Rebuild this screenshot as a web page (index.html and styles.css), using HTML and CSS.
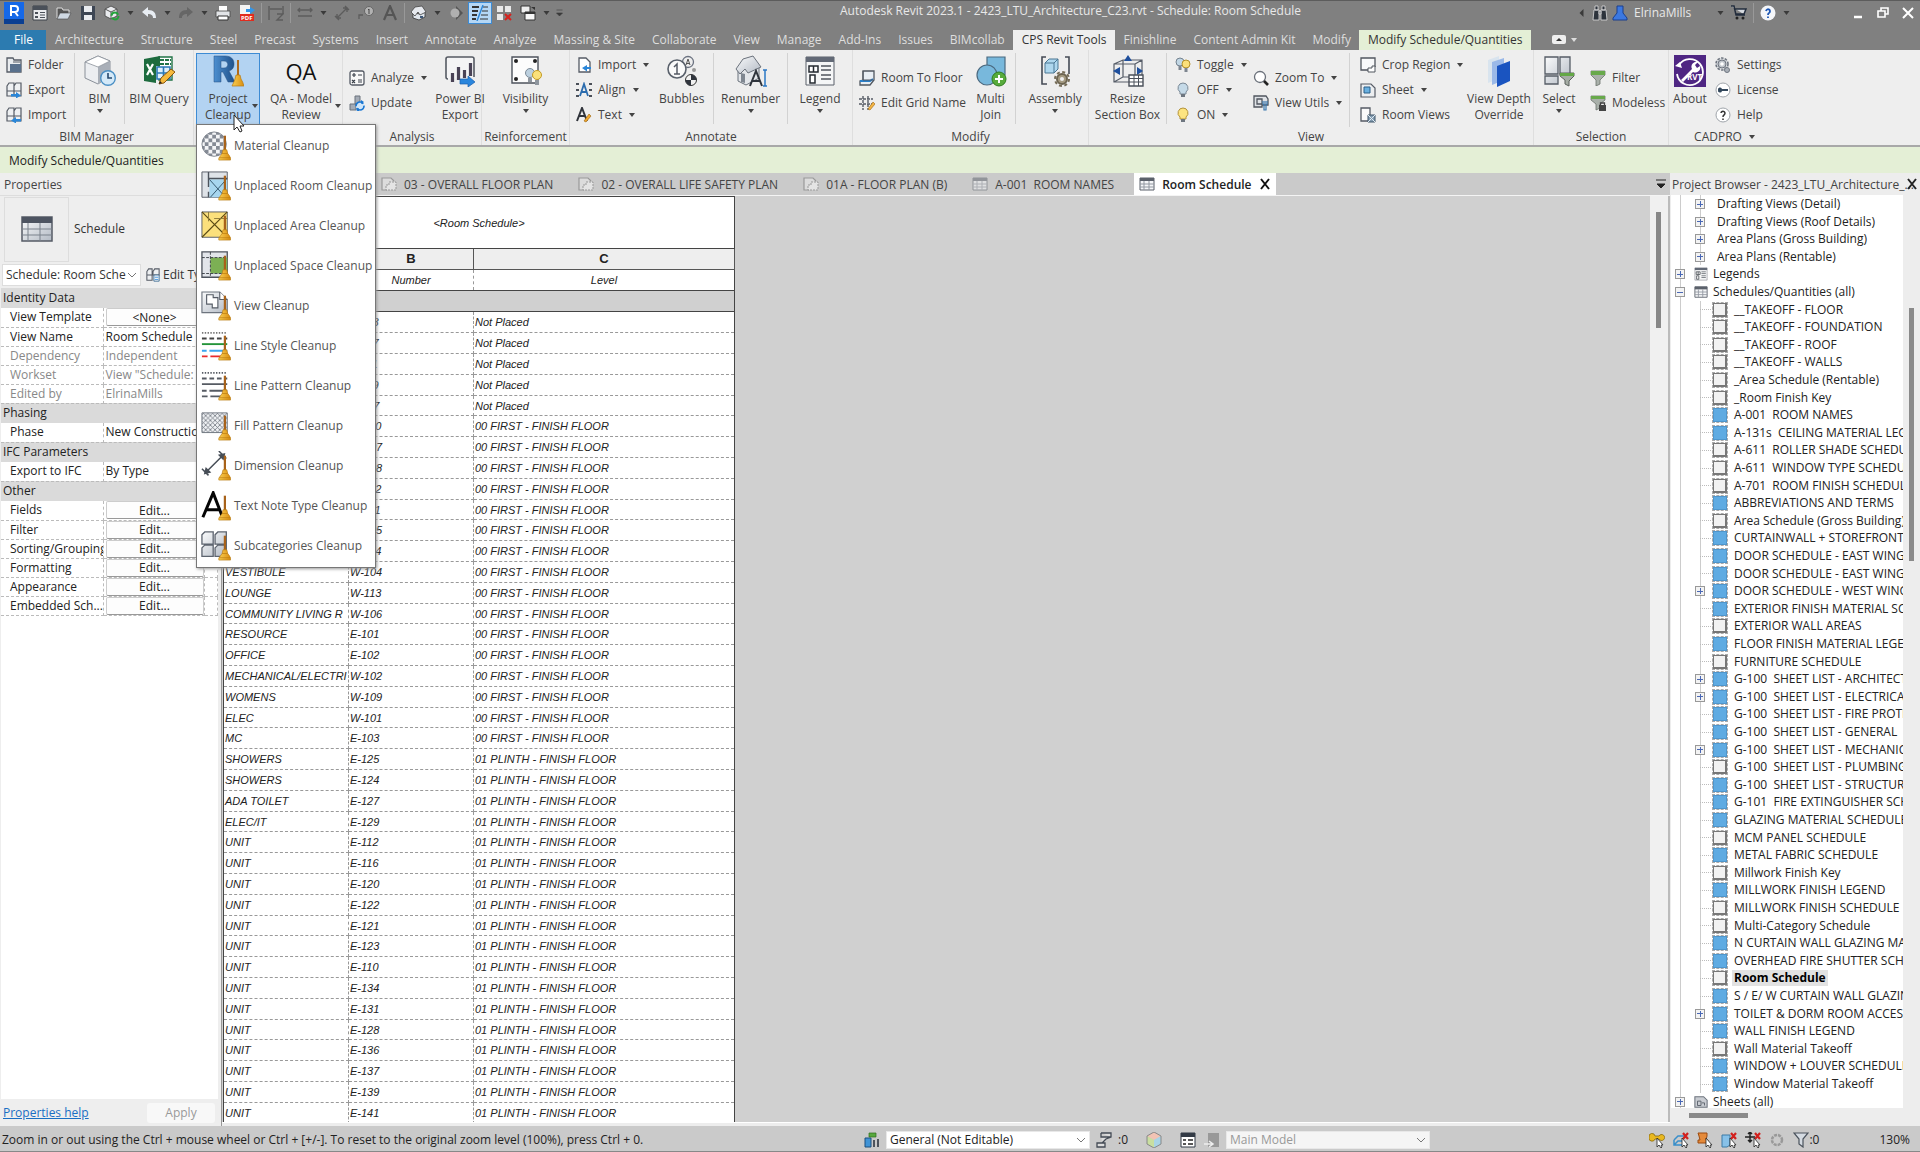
FILE: index.html
```html
<!DOCTYPE html>
<html lang="en">
<head>
<meta charset="utf-8">
<title>Autodesk Revit 2023.1 - Schedule: Room Schedule</title>
<link rel="stylesheet" href="styles.css">
</head>
<body>
<svg class="defs" aria-hidden="true">
  <defs>
    <linearGradient id="gr" x1="0" y1="0" x2="1" y2="1"><stop offset="0" stop-color="#fafbfc"/><stop offset="1" stop-color="#b3bac4"/></linearGradient>
    <linearGradient id="gold" x1="0" y1="0" x2="1" y2="0"><stop offset="0" stop-color="#f9cf52"/><stop offset="1" stop-color="#d98d10"/></linearGradient>
    <linearGradient id="rb" x1="0" y1="0" x2="1" y2="0"><stop offset="0" stop-color="#4d8fd0"/><stop offset="1" stop-color="#1e4f88"/></linearGradient>
    <pattern id="check" width="8" height="8" patternUnits="userSpaceOnUse"><rect width="8" height="8" fill="#f4f5f7"/><path d="M0 0h4v4H0zM4 4h4v4H4z" fill="#858b95"/></pattern>
    <pattern id="hatch" width="5" height="5" patternUnits="userSpaceOnUse"><path d="M0 0l5 5M5 0L0 5" stroke="#6a7078" stroke-width=".8"/></pattern>
  </defs>
  <symbol id="broom" viewBox="0 0 32 32"><path d="M25.500 5v16" stroke="#a8621a" stroke-width="2.400"/><path d="M23.500 20h4l1 4q2 2 3 5v2H19v-2q2-3 3.500-5z" fill="url(#gold)" stroke="#b97a10" stroke-width=".7"/><path d="M22.500 24h6M19.500 28.500h12" stroke="#b97a10" stroke-width=".7"/></symbol>
  <symbol id="arrow" viewBox="0 0 8 8"><path d="M1 2h6L4 6z" fill="currentColor"/></symbol>
  <symbol id="chev" viewBox="0 0 10 10"><path d="M1 3l4 4 4-4" fill="none" stroke="#777"/></symbol>
  <symbol id="folder" viewBox="0 0 16 16"><path d="M1 15V1h6l1 2h7v12z" fill="#e9ecef" stroke="#555b65" stroke-width="1.300"/><path d="M4 7h11v8H4z" fill="#58708c"/><path d="M7 5h7" stroke="#555b65"/></symbol>
  <symbol id="expo" viewBox="0 0 16 16"><path d="M1 4l2-3h5v13H1zM8 4l2-3h5v13H8zM1 9h7M8 9h7" fill="#eef0f2" stroke="#555b65" stroke-width="1.200"/><path d="M5 12h5v-2l5 3.500-5 3v-2H5z" fill="#2a86d8"/></symbol>
  <symbol id="impo" viewBox="0 0 16 16"><path d="M1 4l2-3h5v13H1zM8 4l2-3h5v13H8zM1 9h7M8 9h7" fill="#eef0f2" stroke="#555b65" stroke-width="1.200"/><path d="M15 12h-5v-2l-5 3.500 5 3v-2h5z" fill="#2a86d8"/></symbol>
  <symbol id="etype" viewBox="0 0 16 16"><path d="M1 4l2-3h4v13H1zM8 4l2-3h5v7H8zM1 8h6" fill="#eef0f2" stroke="#555b65" stroke-width="1.200"/><path d="M9 8h6v7H9z" fill="#fff" stroke="#35658f"/><path d="M10 10.500h4M10 13h4" stroke="#2a86d8"/></symbol>
  <symbol id="bim" viewBox="0 0 32 32"><path d="M14 1l12 5v15l-12 8L1 23V7z" fill="#eceef1" stroke="#8a9099"/><path d="M14 12l12-6v15l-12 8z" fill="#a9afb8"/><path d="M1 7l13 5 12-6-12-5z" fill="#fff" stroke="#8a9099" stroke-width=".8"/><circle cx="24" cy="23" r="7.300" fill="#d4e9f8" stroke="#4a8fc4" stroke-width="1.400"/><path d="M24 18v5h4" stroke="#25486e" stroke-width="1.600" fill="none"/></symbol>
  <symbol id="query" viewBox="0 0 32 32"><path d="M16 2h13v23H16z" fill="#fff" stroke="#217346" stroke-width="1.400"/><path d="M17 5h11M17 9h11" stroke="#217346" stroke-width="2" stroke-dasharray="4 1"/><path d="M14 12h13v12H14zM20.500 12v12M14 18h13" stroke="#2a78b8" stroke-width="1.600" fill="#dff0fb"/><path d="M1 4l16-3v10h-4v17L1 26z" fill="#1d6b3e"/><path d="M4 9l6 11M10 9L4 20" stroke="#fff" stroke-width="2.200"/><path d="M16 29l2-6L28 14l4 3-11 11z" fill="#f5b93d" stroke="#7d4a08" stroke-width=".9"/><path d="M16 29l1-3 2 2z" fill="#222"/></symbol>
  <symbol id="rlogo" viewBox="0 0 32 32"><path fill-rule="evenodd" d="M2 27V1h11c6 0 9 3 9 8 0 4-2 6-5 7l6 11h-7l-5-10h-2v10zM9 6v7h3c5 0 5-7 0-7z" fill="url(#rb)" stroke="#244f80" stroke-width=".5"/><path d="M26 5v16" stroke="#b06a1c" stroke-width="2"/><path d="M24 20h4l1 4q2 3 3 7H20q2-4 3-7z" fill="url(#gold)" stroke="#b97a10" stroke-width=".7"/></symbol>
  <symbol id="calc" viewBox="0 0 16 16"><rect x="1" y="1" width="14" height="14" rx="2" fill="#f8f8f8" stroke="#555b65" stroke-width="1.300"/><path d="M3 5h4M5 3v4M9 5h4M3 10l3 3M6 10l-3 3M9 10h4M9 12h4" stroke="#3b414b" stroke-width="1.200"/></symbol>
  <symbol id="update" viewBox="0 0 16 16"><path d="M1 9h6v6H1zM6 1h5v8H6z" fill="#a4abb5" stroke="#6b727d"/><circle cx="11" cy="11" r="4" fill="#cfe6fa" stroke="#1976d2" stroke-width="1.700" stroke-dasharray="10 2"/><path d="M12 5l3 2-3 2zM10 17l-3-2 3-2z" fill="#1976d2"/></symbol>
  <symbol id="pbi" viewBox="0 0 32 32"><path d="M4 24q-2 0-2-2V4q0-2 2-2h24q2 0 2 2v18" fill="#f4f4f5" stroke="#555a63" stroke-width="1.600"/><path d="M8.500 27v-9M14.500 25V12M20.500 23v-8M26.500 21V8" stroke="#4a4356" stroke-width="3.200"/><path d="M16 24h8v-3l7 6-7 5v-3h-8z" fill="#2a86dd" stroke="#1a5fae" stroke-width=".7"/></symbol>
  <symbol id="visi" viewBox="0 0 32 32"><path d="M2 2h26v26H2z" fill="#fcfcfc" stroke="#4d535c" stroke-width="1.400"/><g fill="#222"><circle cx="6" cy="6" r="2"/><circle cx="25" cy="6" r="2"/><circle cx="6" cy="24" r="2"/></g><circle cx="20" cy="18" r="4.500" fill="#bcd0df" stroke="#7c8a96"/><circle cx="27" cy="20" r="4.500" fill="#fbe17a" stroke="#c39b25"/><path d="M18 23h4v4h-4zM25 25h4v5h-4z" fill="#8f969e"/></symbol>
  <symbol id="aimp" viewBox="0 0 16 16"><path d="M3 1h7l4 4v10H3z" fill="#fff" stroke="#555b65" stroke-width="1.300"/><path d="M15 12h-4v2.500L6 11l5-3v2h4z" fill="#2a86d8"/></symbol>
  <symbol id="align" viewBox="0 0 16 16"><path d="M4 14L8 2l4 12M5.500 10h5" fill="none" stroke="#2b6cae" stroke-width="1.800"/><path d="M0 2h3M0 8h3M0 14h3M13 2h3M13 8h3M13 14h3" stroke="#4a4f58" stroke-width="2"/></symbol>
  <symbol id="text" viewBox="0 0 16 16"><path d="M1 14L6 1l5 13M3 9h6" fill="none" stroke="#30343b" stroke-width="2"/><path d="M8 14l5-7 2 2-5 6z" fill="#f2a92e" stroke="#99620c" stroke-width=".6"/></symbol>
  <symbol id="bubbles" viewBox="0 0 32 32"><circle cx="22" cy="7" r="5.500" fill="#eee" stroke="#6b7280" stroke-width="1.300"/><path d="M20 10l2-6 2 6M20.500 8.500h3" fill="none" stroke="#555"/><circle cx="11" cy="14" r="9" fill="#fafafa" stroke="#59606b" stroke-width="1.600"/><path d="M8 12l3-3v10M8 19h6" fill="none" stroke="#555b65" stroke-width="1.500"/><circle cx="25" cy="25" r="5.500" fill="#f1f1f1" stroke="#333"/><path d="M25 25v-5.500A5.500 5.500 0 0 1 30.500 25zM25 25v5.500A5.500 5.500 0 0 1 19.500 25z" fill="#30353d"/><circle cx="28" cy="15" r="2" fill="#999"/></symbol>
  <symbol id="renum" viewBox="0 0 32 32"><path d="M3 14v12l8 4 13-7V10z" fill="#e3e6ea" stroke="#6b727c"/><path d="M1 14L8 4l10-3 8 11-13 6-3-4-5 5z" fill="url(#gr)" stroke="#6b727c"/><path d="M6 27v-9l4 1v9z" fill="#7f8791"/><path d="M15 31l6-15 6 15M17 26h8" fill="none" stroke="#30353d" stroke-width="2"/><path d="M28 15h4M30 15v16M28 31h4" stroke="#2b78c5" stroke-width="1.500"/></symbol>
  <symbol id="legend" viewBox="0 0 32 32"><path d="M2 2h28v28H2z" fill="#f5f6f7" stroke="#5b616b"/><path d="M2 2h28v5H2z" fill="#626976"/><path d="M5 11h9v6H5zM9.500 11v6M6 20h5v8H6z" fill="#fff" stroke="#252a31" stroke-width="1.500"/><path d="M17 11h10M17 15h10M17 20h10M17 24h10" stroke="#50565f" stroke-width="1.600"/></symbol>
  <symbol id="r2f" viewBox="0 0 16 16"><path d="M4 1h11v9l-4 5H1V11l3-1z" fill="#e8eef4" stroke="#505760" stroke-width="1.300"/><path d="M1 11h10l3-2" stroke="#2a7fc9" stroke-width="2" fill="none"/><path d="M4 1v9h10" stroke="#505760" fill="none"/></symbol>
  <symbol id="grid" viewBox="0 0 16 16"><path d="M4 1v14M9 1v14M0 4h14M0 9h14" stroke="#555b65" stroke-width="1.400" stroke-dasharray="3 1"/><path d="M9 14l5-7 2 2-5 6z" fill="#f5b544" stroke="#9b640d" stroke-width=".6"/></symbol>
  <symbol id="join" viewBox="0 0 32 32"><path d="M12 2h18v18H12z" fill="#78b8dc" stroke="#4b6a80" stroke-width="1.200"/><circle cx="12" cy="20" r="10" fill="#78b8dc" stroke="#4b6a80" stroke-width="1.200"/><circle cx="24" cy="24" r="7" fill="#57ab3c" stroke="#2f7d20"/><path d="M24 20v8M20 24h8" stroke="#fff" stroke-width="2"/></symbol>
  <symbol id="assembly" viewBox="0 0 32 32"><path d="M7 2H3v27h5M26 2h4v17" fill="none" stroke="#454b55" stroke-width="1.600"/><path d="M6 8l4-4h9v10l-4 4H6z" fill="#aed7ee" stroke="#4a7693"/><path d="M6 8h9v10M15 8l4-4" fill="none" stroke="#4a7693"/><circle cx="23" cy="24" r="5" fill="#a59b82" stroke="#6c6450" stroke-width="2"/><circle cx="23" cy="24" r="7" fill="none" stroke="#756c57" stroke-width="2" stroke-dasharray="3 2.500"/><circle cx="23" cy="24" r="2" fill="#eee"/></symbol>
  <symbol id="section" viewBox="0 0 32 32"><path d="M2 9l9-4h19v17l-7 5H2zM2 9h21v18M23 9l7-4M11 5v17L2 27M11 22h19" fill="none" stroke="#565d68" stroke-width="1.200"/><path d="M16 0l4 6h-8zM1 16l7-4v8zM31 16l-6-4v8z" fill="#1e4f9d"/><path d="M17 20h14v11H17z" fill="#fff" stroke="#4a505a" stroke-width="1.400"/><path d="M17 23.500h14M17 27h14M22 20v11M26.500 20v11" stroke="#4a505a"/></symbol>
  <symbol id="tog" viewBox="0 0 16 16"><circle cx="5" cy="5" r="4" fill="#c2d7e5" stroke="#74828f"/><path d="M3.500 9h3v4h-3z" fill="#7d858f"/><circle cx="11" cy="7" r="4" fill="#fbe07a" stroke="#b3902c"/><path d="M9.500 11h3v4h-3z" fill="#7d858f"/></symbol>
  <symbol id="off" viewBox="0 0 16 16"><path d="M8 1a5 5 0 0 1 3 9v2H5v-2a5 5 0 0 1 3-9z" fill="#c5dae8" stroke="#7b8996"/><path d="M6 12h4v3H6z" fill="#6e7680"/></symbol>
  <symbol id="on" viewBox="0 0 16 16"><path d="M8 1a5 5 0 0 1 3 9v2H5v-2a5 5 0 0 1 3-9z" fill="#fde480" stroke="#b4933a"/><path d="M6 12h4v3H6z" fill="#6e7680"/></symbol>
  <symbol id="zoom" viewBox="0 0 16 16"><circle cx="7" cy="7" r="5.500" fill="#fff" stroke="#6a707a" stroke-width="1.300"/><path d="M11 11l4 4" stroke="#222" stroke-width="2.600"/></symbol>
  <symbol id="vutil" viewBox="0 0 16 16"><path d="M1 1h12l2 3v6H9v2H1zM4 4h5v5H4z" fill="#dfe2e6" stroke="#50565f" stroke-width="1.300"/><path d="M10 6v3l1 1v5h2v-5l1-1V6M12 6v3" stroke="#3b78ae" fill="none" stroke-width="1.200"/></symbol>
  <symbol id="crop" viewBox="0 0 16 16"><path d="M8 13H1V1h14v9" fill="#f8f9fa" stroke="#50565f" stroke-width="1.300"/><path d="M8 15v-4h4V9h3v6z" fill="#fff" stroke="#50565f"/></symbol>
  <symbol id="sheet" viewBox="0 0 16 16"><path d="M1 2h10l4 4v9H1z" fill="#eceef0" stroke="#555b65" stroke-width="1.200"/><path d="M4 5h6v6H4z" fill="#69b0e0" stroke="#2a5f88"/></symbol>
  <symbol id="rviews" viewBox="0 0 16 16"><path d="M1 1h9v13H1z" fill="#fafafa" stroke="#555b65" stroke-width="1.300"/><path d="M8 8h7v7H8z" fill="#829bb0" stroke="#3f5468"/><path d="M8 8l7 7M15 8l-7 7" stroke="#dfeaf2"/></symbol>
  <symbol id="depth" viewBox="0 0 32 32"><path d="M5 5l11-4v23L5 28z" fill="#d9e4ee"/><path d="M9 7l12-4v22L9 30z" fill="#9bb9e8"/><path d="M14 11l13-5v20l-13 6z" fill="#1a54c0"/></symbol>
  <symbol id="select" viewBox="0 0 32 32"><path d="M2 2h13v17H2zM17 2h10v17H17zM2 21h13v8H2z" fill="url(#gr)" stroke="#555c66" stroke-width="1.300"/><path d="M17 18h14v3l-5 5v5l-4-2v-4l-5-4z" fill="#a5aca4" stroke="#5a615c"/><path d="M17 18h14v3H17z" fill="#63a745"/></symbol>
  <symbol id="funnel" viewBox="0 0 16 16"><path d="M1 1h14v4l-5 5v4l-4 2v-6L1 5z" fill="#a9b0aa" stroke="#69716b" stroke-width=".8"/><path d="M1 1h14v4H1z" fill="#68a94b"/></symbol>
  <symbol id="modeless" viewBox="0 0 16 16"><path d="M1 1h14v4l-5 4v4l-4 2v-6L1 5z" fill="#a9b0aa" stroke="#69716b" stroke-width=".8"/><path d="M1 1h14v3H1z" fill="#68a94b"/><path d="M9 10h7v6H9z" fill="#444"/><path d="M10.500 10V8h4v2" fill="none" stroke="#444" stroke-width="1.300"/></symbol>
  <symbol id="about" viewBox="0 0 32 32"><path d="M0 0h32v32H0z" fill="#4f2683"/><path d="M5 10a13 13 0 1 1-2 9" fill="none" stroke="#fff" stroke-width="1.800"/><path d="M1 11l7 2-2-6zM7 25L18 14a5 5 0 0 1 6-7l-3 3 2 3 3-2a5 5 0 0 1-7 6L9 27z" fill="#fff"/><text x="13" y="25" font-size="8" font-weight="700" fill="#fff" font-family="Open Sans, sans-serif">RVT</text></symbol>
  <symbol id="gear" viewBox="0 0 16 16"><circle cx="7" cy="7" r="6" fill="#d5d8dc" stroke="#6f7680" stroke-width="1.600" stroke-dasharray="2.500 1.300"/><circle cx="7" cy="7" r="4" fill="#c1c6cc" stroke="#6f7680"/><circle cx="12" cy="13" r="2.500" fill="#aab0b8" stroke="#6f7680"/><circle cx="7" cy="7" r="1.800" fill="#fff"/></symbol>
  <symbol id="key" viewBox="0 0 16 16"><circle cx="8" cy="8" r="7" fill="#fff" stroke="#a0a5ab"/><path d="M3 8a2 2 0 1 1 4-1h6v2H7a2 2 0 0 1-4-1z" fill="#33475b"/></symbol>
  <symbol id="help" viewBox="0 0 16 16"><circle cx="8" cy="8" r="7" fill="#fff" stroke="#a0a5ab"/><path d="M6 6a2 2 0 1 1 3 2q-1 .5-1 2M8 11.500v1.500" fill="none" stroke="#333" stroke-width="1.500"/></symbol>
  <symbol id="plan" viewBox="0 0 16 16"><path d="M6 14H1V2h9l3 3" fill="#dcdcdc" stroke="#999" stroke-width="1.200"/><path d="M5 9h3V6h7v8H5z" fill="#e4e4e4" stroke="#999" stroke-dasharray="2 1"/></symbol>
  <symbol id="tbl" viewBox="0 0 16 16"><path d="M1 2h14v12H1z" fill="#f5f6f8" stroke="#5b616b"/><path d="M1 2h14v3H1z" fill="#5b616b"/><path d="M1 8h14M1 11h14M5 5v9M10 5v9" stroke="#9298a1"/></symbol>
  <symbol id="sheets" viewBox="0 0 16 16"><path d="M1 2h10l4 4v8H1z" fill="#c9ccd2" stroke="#6d747e" stroke-width="1.200"/><path d="M4 7h4v5H4zM9 9h3v3" fill="none" stroke="#555c66"/></symbol>
  <symbol id="m-mat" viewBox="0 0 32 32"><circle cx="14" cy="14" r="13" fill="url(#check)" stroke="#7a808a"/></symbol>
  <symbol id="m-room" viewBox="0 0 32 32"><path d="M1 1h27v27H1z" fill="#dfe3e8" stroke="#555b65"/><path d="M9 9h19v19H9z" fill="#a7d6ef"/><path d="M9 9l17 19M27 9L10 28" stroke="#31546b"/><path d="M8 1v16M8 22v6M8 8h20" stroke="#4d535c" stroke-width="1.500"/></symbol>
  <symbol id="m-area" viewBox="0 0 32 32"><path d="M1 1h27v27H1z" fill="#fbe07c" stroke="#555b65"/><path d="M1 1l27 27M28 1L1 28" stroke="#5b4b14" stroke-width="1.200"/><path d="M8 1v10M14 8h14" stroke="#8c7a3a"/></symbol>
  <symbol id="m-space" viewBox="0 0 32 32"><path d="M1 1h27v27H1z" fill="#e2e5ea" stroke="#4d535c" stroke-width="1.400"/><path d="M10 7h18v17H10z" fill="#7cb054"/><path d="M10 1v27M1 7h27M1 24h27" stroke="#3c4148" stroke-dasharray="3 1.500"/></symbol>
  <symbol id="m-view" viewBox="0 0 32 32"><path d="M1 1h19l8 8v14H1z" fill="url(#gr)" stroke="#6d747e" stroke-width="1.200"/><path d="M6 4h7v3h5v11h-6v-4H6zM20 1v8h8" fill="#fff" stroke="#565c66" stroke-width="1.200"/></symbol>
  <symbol id="m-style" viewBox="0 0 32 32"><g fill="none" stroke-width="2"><path d="M1 2h27" stroke="#777" stroke-dasharray="1.500 1.500"/><path d="M1 8h27" stroke="#444" stroke-dasharray="5 3"/><path d="M1 14h27" stroke="#24943a"/><path d="M1 21h5M9 21h19" stroke="#3aa5f0"/><path d="M1 27h6M10 27h14" stroke="#ea2b2b"/></g></symbol>
  <symbol id="m-line" viewBox="0 0 32 32"><g fill="none" stroke="#565b63" stroke-width="2"><path d="M1 2h27" stroke-dasharray="1.500 1.500"/><path d="M1 8h27" stroke-dasharray="5 3"/><path d="M1 14h27M1 21h5M9 21h19M1 27h6M10 27h14"/></g></symbol>
  <symbol id="m-fill" viewBox="0 0 32 32"><path d="M1 2h27v21H1z" fill="#eef0f3"/><path d="M1 2h27v21H1z" fill="url(#hatch)" stroke="#6c737d"/></symbol>
  <symbol id="m-dim" viewBox="0 0 32 32"><path d="M5 23L24 4M1 19l7 7M19 0l8 8" stroke="#474e57" stroke-width="1.600"/><path d="M3 25l2-8 6 6zM26 2l-8 2 6 6z" fill="#474e57"/></symbol>
  <symbol id="m-text" viewBox="0 0 32 32"><path d="M2 28L13 2l10 26M6 20h14" fill="none" stroke="#050505" stroke-width="3.200"/></symbol>
  <symbol id="m-sub" viewBox="0 0 32 32"><path d="M1 4l3-3h9v13H1zM15 4l3-3h9v13H15zM1 18l3-3h9v12H1zM15 18l3-3h9v12H15z" fill="url(#gr)" stroke="#5d646f" stroke-width="1.400"/></symbol>
</svg>

<header class="titlebar">
  <div class="qat">
    <button class="slot logo" aria-label="Revit"><svg viewBox="0 0 20 22"><path d="M0 0h20v17H0z" fill="#1568e8"/><path d="M0 17h20v5H0z" fill="#0b3f92"/><path d="M7 14V4h4q3 0 3 3t-3 3H7M11 10l3 4" fill="none" stroke="#fff" stroke-width="2"/></svg></button>
    <button class="slot" aria-label="Home"><svg viewBox="0 0 16 16"><path d="M1 1h14v14H1z" fill="#e9ebee" stroke="#3b4048"/><path d="M1 1h14v4H1z" fill="#4a5059"/><path d="M3 7h3v2H3zM3 11h3v2H3z" fill="#4a5059"/><path d="M8 7.500h5M8 10h5M8 12.500h5" stroke="#4a5059"/></svg></button>
    <button class="slot" aria-label="Open"><svg viewBox="0 0 16 16"><path d="M1 13V3h5l1 2h6v3" fill="#555" stroke="#ddd"/><path d="M1 14l3-6h11l-3 6z" fill="#cfd8e2" stroke="#444" stroke-width=".6"/></svg></button>
    <button class="slot" aria-label="Save"><svg viewBox="0 0 16 16"><path d="M1 1h14v14H1z" fill="#3d4654"/><path d="M4 1h8v6H4zM4 10h8v5H4z" fill="#e9ecf0"/></svg></button>
    <button class="slot" aria-label="Synchronize"><svg viewBox="0 0 16 16"><path d="M1 4l6-3 6 3v7l-6 3-6-3z" fill="#e9ebee" stroke="#555"/><path d="M7 7v7M1 4l6 3 6-3" stroke="#555" fill="none"/><circle cx="11" cy="11" r="3.500" fill="none" stroke="#22a33a" stroke-width="2" stroke-dasharray="9 2"/></svg></button>
    <svg class="dd"><use href="#arrow"/></svg>
    <button class="slot" aria-label="Undo"><svg viewBox="0 0 16 16"><path d="M1 7l6-5v3c6 0 8 3 8 8h-3c0-3-2-4-5-4v3z" fill="#e8edf3"/></svg></button>
    <svg class="dd"><use href="#arrow"/></svg>
    <button class="slot dim" aria-label="Redo"><svg viewBox="0 0 16 16"><path d="M15 7L9 2v3c-6 0-8 3-8 8h3c0-3 2-4 5-4v3z" fill="#666"/></svg></button>
    <svg class="dd"><use href="#arrow"/></svg>
    <button class="slot" aria-label="Print"><svg viewBox="0 0 16 16"><path d="M4 1h8v6H4z" fill="#fff"/><path d="M1 6h14v6H1z" fill="#e2e4e7" stroke="#444" stroke-width=".8"/><path d="M3 11h10v4H3z" fill="#fff" stroke="#333"/></svg></button>
    <button class="slot" aria-label="Export PDF"><svg viewBox="0 0 16 16"><path d="M1 0h10v10H1z" fill="#f4f4f4"/><path d="M7 4h4V2l5 3-5 4V7H7z" fill="#3295e8"/><path d="M1 9h14v7H1z" fill="#e12c1e"/><text x="2" y="15" font-size="6" font-weight="700" fill="#fff" font-family="Open Sans, sans-serif">PDF</text></svg></button>
    <i class="vs"></i>
    <button class="slot dim" aria-label="Measure"><svg viewBox="0 0 16 16"><path d="M1 1v14M15 1v8M2 4h12M9 9h6l-6 6h6" fill="none" stroke="#5c5c5c" stroke-width="1.400"/></svg></button>
    <i class="vs"></i>
    <button class="slot dim" aria-label="Aligned Dimension"><svg viewBox="0 0 16 16"><path d="M1 5h14M1 11h14M3 3l-2 2 2 2M13 3l2 2-2 2" fill="none" stroke="#5c5c5c" stroke-width="1.400"/></svg></button>
    <svg class="dd"><use href="#arrow"/></svg>
    <button class="slot dim" aria-label="Dimension"><svg viewBox="0 0 16 16"><path d="M3 13L13 3M1 11l4 4M11 1l4 4M3 9v4h4M9 3h4v4" fill="none" stroke="#5c5c5c" stroke-width="1.400"/></svg></button>
    <button class="slot dim" aria-label="Tag"><svg viewBox="0 0 16 16"><circle cx="11" cy="6" r="4.500" fill="#b2b2b2" stroke="#666"/><path d="M10 5l1-1v5" fill="none" stroke="#444"/><path d="M1 14v-4h4" fill="none" stroke="#5c5c5c" stroke-width="1.300"/></svg></button>
    <button class="slot dim" aria-label="Text"><svg viewBox="0 0 16 16"><path d="M2 15L8 1l6 14M4 10h8" fill="none" stroke="#555" stroke-width="2.200"/></svg></button>
    <i class="vs"></i>
    <button class="slot" aria-label="3D View"><svg viewBox="0 0 16 16"><path d="M2 8v5l6 2 6-3V7L9 9z" fill="#dfe5ec" stroke="#333" stroke-width=".8"/><path d="M0 7l4-5 7-1 4 6-6 3-2-3-3 4z" fill="#e6e9ee" stroke="#444" stroke-width=".8"/><path d="M9 11h3v2H9z" fill="#3d5878"/></svg></button>
    <svg class="dd"><use href="#arrow"/></svg>
    <button class="slot dim" aria-label="Section"><svg viewBox="0 0 16 16"><path d="M8 1l7 7-7 7z" fill="#555"/><circle cx="7" cy="8" r="4.500" fill="#b0b0b0"/></svg></button>
    <button class="slot lit" aria-label="Thin Lines"><svg viewBox="0 0 16 16"><path d="M0 2h7M0 6h6M0 10h5M0 14h4" stroke="#333" stroke-width="2"/><path d="M11 2h5M10 6h6M9 10h7M8 14h8" stroke="#333"/><path d="M5 16L11 0" stroke="#2a86d8" stroke-width="1.400"/></svg></button>
    <button class="slot" aria-label="Close Inactive"><svg viewBox="0 0 16 16"><path d="M1 1h6v6H1zM9 1h6v6H9zM1 9h6v6H1z" fill="#e8e8e8"/><path d="M9 9l6 6M15 9l-6 6" stroke="#d6221e" stroke-width="2"/></svg></button>
    <button class="slot" aria-label="Switch Windows"><svg viewBox="0 0 16 16"><path d="M1 1h9v7H1z" fill="#eee" stroke="#333"/><path d="M5 7h10v8H5z" fill="#f8f8f8" stroke="#333"/><path d="M5 7h10v2H5zM11 2h4v3" fill="#333"/></svg></button>
    <svg class="dd"><use href="#arrow"/></svg>
    <svg class="dd" viewBox="0 0 8 8"><path d="M1 1h6M1 4h6L4 7z" fill="currentColor" stroke="currentColor" stroke-width=".6"/></svg>
  </div>
  <div class="title">Autodesk Revit 2023.1 - 2423_LTU_Architecture_C23.rvt - Schedule: Room Schedule</div>
  <div class="account">
    <svg class="dd" viewBox="0 0 8 8"><path d="M6 0v8L2 4z" fill="currentColor"/></svg>
    <button class="slot" aria-label="Search"><svg viewBox="0 0 16 16"><path d="M3 1h3v4H3zM10 1h3v4h-3zM2 5h5l0 10H1zM9 5h5l1 10H9zM7 6h2v3H7z" fill="#2d333c" stroke="#ddd" stroke-width=".8"/></svg></button>
    <button class="user"><svg viewBox="0 0 16 16"><path d="M5 1h6v7l4 5v2H1v-2l4-5z" fill="#3c78e0" stroke="#1b3f8d"/></svg>ElrinaMills</button>
    <svg class="dd"><use href="#arrow"/></svg>
    <button class="slot" aria-label="App Store"><svg viewBox="0 0 16 16"><path d="M0 1h3l2 9h9M4 4h11l-2 5H5" fill="#d6dae0" stroke="#222c3c" stroke-width="1.500"/><circle cx="6" cy="13" r="1.500" fill="#222"/><circle cx="12" cy="13" r="1.500" fill="#222"/></svg></button>
    <i class="vs"></i>
    <button class="slot" aria-label="Help"><svg viewBox="0 0 16 16"><circle cx="8" cy="8" r="7.500" fill="#f4f6f9"/><path d="M6 6a2 2 0 1 1 3 2q-1 .5-1 2M8 11.500v1.500" fill="none" stroke="#1c56b4" stroke-width="1.800"/></svg></button>
    <svg class="dd"><use href="#arrow"/></svg>
    <button class="win first" aria-label="Minimize"><svg viewBox="0 0 12 12"><path d="M2 10h8" stroke="#fff" stroke-width="2.500"/></svg></button>
    <button class="win" aria-label="Restore"><svg viewBox="0 0 12 12"><path d="M4 4V1h7v6H8M1 4h7v6H1z" fill="none" stroke="#fff" stroke-width="1.600"/></svg></button>
    <button class="win" aria-label="Close"><svg viewBox="0 0 12 12"><path d="M1 1l10 10M11 1L1 11" stroke="#fff" stroke-width="2"/></svg></button>
  </div>
</header>

<nav class="tabs">
  <a href="#" class="file">File</a><a href="#">Architecture</a><a href="#">Structure</a><a href="#">Steel</a><a href="#">Precast</a><a href="#">Systems</a><a href="#">Insert</a><a href="#">Annotate</a><a href="#">Analyze</a><a href="#">Massing &amp; Site</a><a href="#">Collaborate</a><a href="#">View</a><a href="#">Manage</a><a href="#">Add-Ins</a><a href="#">Issues</a><a href="#">BIMcollab</a><a href="#" class="active">CPS Revit Tools</a><a href="#">Finishline</a><a href="#">Content Admin Kit</a><a href="#">Modify</a><a href="#" class="ctx">Modify Schedule/Quantities</a>
  <button class="mini" aria-label="Minimize ribbon"><svg viewBox="0 0 28 12"><rect x="1" y="1" width="14" height="9" rx="2" fill="#eee"/><path d="M5 7h6L8 4z" fill="#333"/><path d="M20 4h6l-3 4z" fill="#ddd"/></svg></button>
</nav>

<section class="ribbon">
  <div class="panel p194">
    <div class="tools">
      <div class="stack sep"><button><svg><use href="#folder"/></svg>Folder</button><button><svg><use href="#expo"/></svg>Export</button><button><svg><use href="#impo"/></svg>Import</button></div>
      <button class="big w50 sep"><svg><use href="#bim"/></svg><span>BIM</span><svg class="dd"><use href="#arrow"/></svg></button>
      <button class="big w68"><svg><use href="#query"/></svg><span>BIM Query</span></button>
    </div>
    <div class="plabel">BIM Manager</div>
  </div>
  <div class="panel p149">
    <div class="tools">
      <div class="drop">
        <button class="big lit w64"><svg><use href="#rlogo"/></svg><span>Project<br>Cleanup</span><svg class="dd side"><use href="#arrow"/></svg></button>
        <div class="menu" role="menu">
          <button role="menuitem"><span class="mi"><svg><use href="#m-mat"/></svg><svg><use href="#broom"/></svg></span>Material Cleanup</button>
          <button role="menuitem"><span class="mi"><svg><use href="#m-room"/></svg><svg><use href="#broom"/></svg></span>Unplaced Room Cleanup</button>
          <button role="menuitem"><span class="mi"><svg><use href="#m-area"/></svg><svg><use href="#broom"/></svg></span>Unplaced Area Cleanup</button>
          <button role="menuitem"><span class="mi"><svg><use href="#m-space"/></svg><svg><use href="#broom"/></svg></span>Unplaced Space Cleanup</button>
          <button role="menuitem"><span class="mi"><svg><use href="#m-view"/></svg><svg><use href="#broom"/></svg></span>View Cleanup</button>
          <button role="menuitem"><span class="mi"><svg><use href="#m-style"/></svg><svg><use href="#broom"/></svg></span>Line Style Cleanup</button>
          <button role="menuitem"><span class="mi"><svg><use href="#m-line"/></svg><svg><use href="#broom"/></svg></span>Line Pattern Cleanup</button>
          <button role="menuitem"><span class="mi"><svg><use href="#m-fill"/></svg><svg><use href="#broom"/></svg></span>Fill Pattern Cleanup</button>
          <button role="menuitem"><span class="mi"><svg><use href="#m-dim"/></svg><svg><use href="#broom"/></svg></span>Dimension Cleanup</button>
          <button role="menuitem"><span class="mi"><svg><use href="#m-text"/></svg><svg><use href="#broom"/></svg></span>Text Note Type Cleanup</button>
          <button role="menuitem"><span class="mi"><svg><use href="#m-sub"/></svg><svg><use href="#broom"/></svg></span>Subcategories Cleanup</button>
        </div>
        <svg class="cursor" viewBox="0 0 12 19"><path d="M1 1v15l3-3 3 5 2-1-2-5h4z" fill="#fff" stroke="#222"/></svg>
      </div>
      <button class="big w84"><b class="qa">QA</b><span>QA - Model<br>Review</span><svg class="dd side"><use href="#arrow"/></svg></button>
    </div>
    <div class="plabel"></div>
  </div>
  <div class="panel p139">
    <div class="tools">
      <div class="stack"><button><svg><use href="#calc"/></svg>Analyze<svg class="dd"><use href="#arrow"/></svg></button><button><svg><use href="#update"/></svg>Update</button></div>
      <button class="big w64"><svg><use href="#pbi"/></svg><span>Power BI<br>Export</span></button>
    </div>
    <div class="plabel">Analysis</div>
  </div>
  <div class="panel p88">
    <div class="tools"><button class="big w84"><svg><use href="#visi"/></svg><span>Visibility</span><svg class="dd"><use href="#arrow"/></svg></button></div>
    <div class="plabel">Reinforcement</div>
  </div>
  <div class="panel p283">
    <div class="tools">
      <div class="stack"><button><svg><use href="#aimp"/></svg>Import<svg class="dd"><use href="#arrow"/></svg></button><button><svg><use href="#align"/></svg>Align<svg class="dd"><use href="#arrow"/></svg></button><button><svg><use href="#text"/></svg>Text<svg class="dd"><use href="#arrow"/></svg></button></div>
      <button class="big w64 sep"><svg><use href="#bubbles"/></svg><span>Bubbles</span></button>
      <button class="big w84 sep"><svg><use href="#renum"/></svg><span>Renumber</span><svg class="dd"><use href="#arrow"/></svg></button>
      <button class="big w64"><svg><use href="#legend"/></svg><span>Legend</span><svg class="dd"><use href="#arrow"/></svg></button>
    </div>
    <div class="plabel">Annotate</div>
  </div>
  <div class="panel p236">
    <div class="tools">
      <div class="stack"><button><svg><use href="#r2f"/></svg>Room To Floor</button><button><svg><use href="#grid"/></svg>Edit Grid Name</button></div>
      <button class="big w50 sep"><svg><use href="#join"/></svg><span>Multi<br>Join</span></button>
      <button class="big w78"><svg><use href="#assembly"/></svg><span>Assembly</span><svg class="dd"><use href="#arrow"/></svg></button>
    </div>
    <div class="plabel">Modify</div>
  </div>
  <div class="panel p445">
    <div class="tools">
      <button class="big w78 sep"><svg><use href="#section"/></svg><span>Resize<br>Section Box</span></button>
      <div class="stack narrow"><button><svg><use href="#tog"/></svg>Toggle<svg class="dd"><use href="#arrow"/></svg></button><button><svg><use href="#off"/></svg>OFF<svg class="dd"><use href="#arrow"/></svg></button><button><svg><use href="#on"/></svg>ON<svg class="dd"><use href="#arrow"/></svg></button></div>
      <div class="stack medium sep"><button><svg><use href="#zoom"/></svg>Zoom To<svg class="dd"><use href="#arrow"/></svg></button><button><svg><use href="#vutil"/></svg>View Utils<svg class="dd"><use href="#arrow"/></svg></button></div>
      <div class="stack"><button><svg><use href="#crop"/></svg>Crop Region<svg class="dd"><use href="#arrow"/></svg></button><button><svg><use href="#sheet"/></svg>Sheet<svg class="dd"><use href="#arrow"/></svg></button><button><svg><use href="#rviews"/></svg>Room Views</button></div>
      <button class="big w68"><svg><use href="#depth"/></svg><span>View Depth<br>Override</span></button>
    </div>
    <div class="plabel">View</div>
  </div>
  <div class="panel p135">
    <div class="tools">
      <button class="big w50"><svg><use href="#select"/></svg><span>Select</span><svg class="dd"><use href="#arrow"/></svg></button>
      <div class="stack"><button><svg><use href="#funnel"/></svg>Filter</button><button><svg><use href="#modeless"/></svg>Modeless</button></div>
    </div>
    <div class="plabel">Selection</div>
  </div>
  <div class="panel last">
    <div class="tools">
      <button class="big w42"><svg><use href="#about"/></svg><span>About</span></button>
      <div class="stack slim"><button><svg><use href="#gear"/></svg>Settings</button><button><svg><use href="#key"/></svg>License</button><button><svg><use href="#help"/></svg>Help</button></div>
    </div>
    <div class="plabel cad">CADPRO<svg class="dd"><use href="#arrow"/></svg></div>
  </div>
</section>
<div class="context">Modify Schedule/Quantities</div>

<main>
  <aside class="props">
    <h2>Properties</h2>
    <div class="type"><span class="thumb"><svg viewBox="0 0 32 26"><path d="M1 1h30v24H1z" fill="url(#gr)" stroke="#555b65" stroke-width="1.500"/><path d="M1 1h30v6H1z" fill="#4d5461"/><path d="M1 13h30M1 19h30M7 7v18M19 7v18" stroke="#7b828c"/></svg></span>Schedule</div>
    <div class="picker"><span class="combo"><select aria-label="Type"><option>Schedule: Room Sche</option></select><svg><use href="#chev"/></svg></span><button><svg><use href="#etype"/></svg>Edit Type</button></div>
    <div class="gridbox">
    <table class="grid">
      <colgroup><col class="c1"><col class="c2"><col class="c3"></colgroup>
      <tr><th colspan="3">Identity Data</th></tr>
      <tr><td>View Template</td><td><button>&lt;None&gt;</button></td><td></td></tr>
      <tr><td>View Name</td><td>Room Schedule</td><td></td></tr>
      <tr class="ro"><td>Dependency</td><td>Independent</td><td></td></tr>
      <tr class="ro"><td>Workset</td><td>View "Schedule: ...</td><td></td></tr>
      <tr class="ro"><td>Edited by</td><td>ElrinaMills</td><td></td></tr>
      <tr><th colspan="3">Phasing</th></tr>
      <tr><td>Phase</td><td>New Construction</td><td></td></tr>
      <tr><th colspan="3">IFC Parameters</th></tr>
      <tr><td>Export to IFC</td><td>By Type</td><td></td></tr>
      <tr><th colspan="3">Other</th></tr>
      <tr><td>Fields</td><td><button>Edit...</button></td><td></td></tr>
      <tr><td>Filter</td><td><button>Edit...</button></td><td></td></tr>
      <tr><td>Sorting/Grouping</td><td><button>Edit...</button></td><td></td></tr>
      <tr><td>Formatting</td><td><button>Edit...</button></td><td></td></tr>
      <tr><td>Appearance</td><td><button>Edit...</button></td><td></td></tr>
      <tr><td>Embedded Sch...</td><td><button>Edit...</button></td><td></td></tr>
    </table>
    </div>
    <div class="pfoot"><a href="#">Properties help</a><button disabled>Apply</button></div>
  </aside>

  <section class="work">
    <div class="vtabs">
      <a href="#"><svg><use href="#plan"/></svg>03 - OVERALL FLOOR PLAN</a>
      <a href="#"><svg><use href="#plan"/></svg>02 - OVERALL LIFE SAFETY PLAN</a>
      <a href="#"><svg><use href="#plan"/></svg>01A - FLOOR PLAN (B)</a>
      <a href="#" class="faint"><svg><use href="#tbl"/></svg>A-001&nbsp; ROOM NAMES</a>
      <a href="#" class="cur"><svg><use href="#tbl"/></svg>Room Schedule<svg class="x" viewBox="0 0 12 12"><path d="M2 1l8 10M10 1L2 11" stroke="#111" stroke-width="2"/></svg></a>
      <button class="more" aria-label="More views"><svg viewBox="0 0 10 10"><path d="M0 1h10M1 5h8L5 9z" fill="#222" stroke="#222"/></svg></button>
    </div>
    <div class="canvas">
      <div class="sheet">
      <table class="sched">
        <colgroup><col class="ca"><col class="ca"><col class="cc"></colgroup>
        <thead>
          <tr class="ttl"><td colspan="3">&lt;Room Schedule&gt;</td></tr>
          <tr class="abc"><th>A</th><th>B</th><th>C</th></tr>
          <tr class="hd"><td>Name</td><td>Number</td><td>Level</td></tr>
          <tr class="gap"><td colspan="3"></td></tr>
        </thead>
        <tbody>
          <tr><td>UNIT</td><td>E-113</td><td>Not Placed</td></tr>
          <tr><td>UNIT</td><td>E-117</td><td>Not Placed</td></tr>
          <tr><td>UNIT</td><td>E-111</td><td>Not Placed</td></tr>
          <tr><td>UNIT</td><td>E-119</td><td>Not Placed</td></tr>
          <tr><td>UNIT</td><td>E-107</td><td>Not Placed</td></tr>
          <tr><td>UNIT</td><td>W-110</td><td>00 FIRST - FINISH FLOOR</td></tr>
          <tr><td>UNIT</td><td>W-107</td><td>00 FIRST - FINISH FLOOR</td></tr>
          <tr><td>UNIT</td><td>W-108</td><td>00 FIRST - FINISH FLOOR</td></tr>
          <tr><td>UNIT</td><td>W-112</td><td>00 FIRST - FINISH FLOOR</td></tr>
          <tr><td>UNIT</td><td>W-111</td><td>00 FIRST - FINISH FLOOR</td></tr>
          <tr><td>UNIT</td><td>W-105</td><td>00 FIRST - FINISH FLOOR</td></tr>
          <tr><td>UNIT</td><td>W-114</td><td>00 FIRST - FINISH FLOOR</td></tr>
          <tr><td>VESTIBULE</td><td>W-104</td><td>00 FIRST - FINISH FLOOR</td></tr>
          <tr><td>LOUNGE</td><td>W-113</td><td>00 FIRST - FINISH FLOOR</td></tr>
          <tr><td>COMMUNITY LIVING R</td><td>W-106</td><td>00 FIRST - FINISH FLOOR</td></tr>
          <tr><td>RESOURCE</td><td>E-101</td><td>00 FIRST - FINISH FLOOR</td></tr>
          <tr><td>OFFICE</td><td>E-102</td><td>00 FIRST - FINISH FLOOR</td></tr>
          <tr><td>MECHANICAL/ELECTRI</td><td>W-102</td><td>00 FIRST - FINISH FLOOR</td></tr>
          <tr><td>WOMENS</td><td>W-109</td><td>00 FIRST - FINISH FLOOR</td></tr>
          <tr><td>ELEC</td><td>W-101</td><td>00 FIRST - FINISH FLOOR</td></tr>
          <tr><td>MC</td><td>E-103</td><td>00 FIRST - FINISH FLOOR</td></tr>
          <tr><td>SHOWERS</td><td>E-125</td><td>01 PLINTH - FINISH FLOOR</td></tr>
          <tr><td>SHOWERS</td><td>E-124</td><td>01 PLINTH - FINISH FLOOR</td></tr>
          <tr><td>ADA TOILET</td><td>E-127</td><td>01 PLINTH - FINISH FLOOR</td></tr>
          <tr><td>ELEC/IT</td><td>E-129</td><td>01 PLINTH - FINISH FLOOR</td></tr>
          <tr><td>UNIT</td><td>E-112</td><td>01 PLINTH - FINISH FLOOR</td></tr>
          <tr><td>UNIT</td><td>E-116</td><td>01 PLINTH - FINISH FLOOR</td></tr>
          <tr><td>UNIT</td><td>E-120</td><td>01 PLINTH - FINISH FLOOR</td></tr>
          <tr><td>UNIT</td><td>E-122</td><td>01 PLINTH - FINISH FLOOR</td></tr>
          <tr><td>UNIT</td><td>E-121</td><td>01 PLINTH - FINISH FLOOR</td></tr>
          <tr><td>UNIT</td><td>E-123</td><td>01 PLINTH - FINISH FLOOR</td></tr>
          <tr><td>UNIT</td><td>E-110</td><td>01 PLINTH - FINISH FLOOR</td></tr>
          <tr><td>UNIT</td><td>E-134</td><td>01 PLINTH - FINISH FLOOR</td></tr>
          <tr><td>UNIT</td><td>E-131</td><td>01 PLINTH - FINISH FLOOR</td></tr>
          <tr><td>UNIT</td><td>E-128</td><td>01 PLINTH - FINISH FLOOR</td></tr>
          <tr><td>UNIT</td><td>E-136</td><td>01 PLINTH - FINISH FLOOR</td></tr>
          <tr><td>UNIT</td><td>E-137</td><td>01 PLINTH - FINISH FLOOR</td></tr>
          <tr><td>UNIT</td><td>E-139</td><td>01 PLINTH - FINISH FLOOR</td></tr>
          <tr><td>UNIT</td><td>E-141</td><td>01 PLINTH - FINISH FLOOR</td></tr>
          <tr><td></td><td></td><td></td></tr>
        </tbody>
      </table>
      </div>
      <div class="vscroll"><i></i></div>
    </div>
  </section>

  <aside class="browser">
    <h2><span>Project Browser - 2423_LTU_Architecture_...</span><svg viewBox="0 0 12 12"><path d="M2 1l8 10M10 1L2 11" stroke="#222" stroke-width="2"/></svg></h2>
    <div class="brow">
      <ul class="tree">
        <li class="sub"><i class="ex"></i>Drafting Views (Detail)</li>
        <li class="sub"><i class="ex"></i>Drafting Views (Roof Details)</li>
        <li class="sub"><i class="ex"></i>Area Plans (Gross Building)</li>
        <li class="sub"><i class="ex"></i>Area Plans (Rentable)</li>
        <li class="top"><i class="ex"></i><svg><use href="#legend"/></svg>Legends</li>
        <li class="top"><i class="ex open"></i><svg><use href="#tbl"/></svg>Schedules/Quantities (all)</li>
        <li><i></i><s></s>__TAKEOFF - FLOOR</li>
        <li><i></i><s></s>__TAKEOFF - FOUNDATION</li>
        <li><i></i><s></s>__TAKEOFF - ROOF</li>
        <li><i></i><s></s>__TAKEOFF - WALLS</li>
        <li><i></i><s></s>_Area Schedule (Rentable)</li>
        <li><i></i><s></s>_Room Finish Key</li>
        <li><i></i><s class="on"></s>A-001&nbsp; ROOM NAMES</li>
        <li><i></i><s class="on"></s>A-131s&nbsp; CEILING MATERIAL LEGEND</li>
        <li><i></i><s></s>A-611&nbsp; ROLLER SHADE SCHEDULE</li>
        <li><i></i><s></s>A-611&nbsp; WINDOW TYPE SCHEDULE</li>
        <li><i></i><s></s>A-701&nbsp; ROOM FINISH SCHEDULE</li>
        <li><i></i><s class="on"></s>ABBREVIATIONS AND TERMS</li>
        <li><i></i><s></s>Area Schedule (Gross Building)</li>
        <li><i></i><s class="on"></s>CURTAINWALL + STOREFRONT SCHEDULE</li>
        <li><i></i><s class="on"></s>DOOR SCHEDULE - EAST WING</li>
        <li><i></i><s class="on"></s>DOOR SCHEDULE - EAST WING</li>
        <li><i class="ex"></i><s class="on"></s>DOOR SCHEDULE - WEST WING</li>
        <li><i></i><s class="on"></s>EXTERIOR FINISH MATERIAL SCHEDULE</li>
        <li><i></i><s></s>EXTERIOR WALL AREAS</li>
        <li><i></i><s class="on"></s>FLOOR FINISH MATERIAL LEGEND</li>
        <li><i></i><s></s>FURNITURE SCHEDULE</li>
        <li><i class="ex"></i><s class="on"></s>G-100&nbsp; SHEET LIST - ARCHITECTURE</li>
        <li><i class="ex"></i><s class="on"></s>G-100&nbsp; SHEET LIST - ELECTRICAL</li>
        <li><i></i><s class="on"></s>G-100&nbsp; SHEET LIST - FIRE PROTECTION</li>
        <li><i></i><s class="on"></s>G-100&nbsp; SHEET LIST - GENERAL</li>
        <li><i class="ex"></i><s class="on"></s>G-100&nbsp; SHEET LIST - MECHANICAL</li>
        <li><i></i><s></s>G-100&nbsp; SHEET LIST - PLUMBING</li>
        <li><i></i><s class="on"></s>G-100&nbsp; SHEET LIST - STRUCTURAL</li>
        <li><i></i><s class="on"></s>G-101&nbsp; FIRE EXTINGUISHER SCHEDULE</li>
        <li><i></i><s class="on"></s>GLAZING MATERIAL SCHEDULE</li>
        <li><i></i><s></s>MCM PANEL SCHEDULE</li>
        <li><i></i><s class="on"></s>METAL FABRIC SCHEDULE</li>
        <li><i></i><s></s>Millwork Finish Key</li>
        <li><i></i><s class="on"></s>MILLWORK FINISH LEGEND</li>
        <li><i></i><s></s>MILLWORK FINISH SCHEDULE</li>
        <li><i></i><s></s>Multi-Category Schedule</li>
        <li><i></i><s class="on"></s>N CURTAIN WALL GLAZING MATERIAL</li>
        <li><i></i><s class="on"></s>OVERHEAD FIRE SHUTTER SCHEDULE</li>
        <li class="sel"><i></i><s></s><b>Room Schedule</b></li>
        <li><i></i><s class="on"></s>S / E/ W CURTAIN WALL GLAZING</li>
        <li><i class="ex"></i><s class="on"></s>TOILET &amp; DORM ROOM ACCESSORIES</li>
        <li><i></i><s class="on"></s>WALL FINISH LEGEND</li>
        <li><i></i><s></s>Wall Material Takeoff</li>
        <li><i></i><s class="on"></s>WINDOW + LOUVER SCHEDULE</li>
        <li><i></i><s class="on"></s>Window Material Takeoff</li>
        <li class="top"><i class="ex"></i><svg><use href="#sheets"/></svg>Sheets (all)</li>
      </ul>
      <div class="bscroll"><i></i></div>
    </div>
    <div class="hscroll"><i></i></div>
  </aside>
</main>

<footer class="status">
  <span class="hint">Zoom in or out using the Ctrl + mouse wheel or Ctrl + [+/-]. To reset to the original zoom level (100%), press Ctrl + 0.</span>
  <div class="mid">
    <svg viewBox="0 0 16 16"><path d="M1 6h6v9H1z" fill="#3f93d6" stroke="#1d4f7d"/><path d="M5 1h7v4H5z" fill="#58a83e" stroke="#2f6e1e" stroke-width=".7"/><path d="M10 8v7M14 7v8" stroke="#4d535c" stroke-width="2"/></svg>
    <span class="combo"><select aria-label="Active workset"><option>General (Not Editable)</option></select><svg><use href="#chev"/></svg></span>
    <svg class="pen" viewBox="0 0 16 16"><path d="M5 1h10v4l-5 2-4 4M5 1v4h10M1 15v-4h8v4z" fill="#ddd" stroke="#444b55" stroke-width="1.300"/></svg>
    <span>:0</span>
    <svg class="cube" viewBox="0 0 16 16"><path d="M8 0l7 4-7 4-7-4z" fill="#f2c3b4"/><path d="M1 4l7 4v8l-7-4z" fill="#c9dfa0"/><path d="M15 4L8 8v8l7-4z" fill="#a9d4e6"/><path d="M8 0l7 4v8l-7 4-7-4V4z" fill="none" stroke="#888"/></svg>
    <svg class="opt" viewBox="0 0 16 16"><path d="M1 1h14v14H1z" fill="#fff" stroke="#333b46"/><path d="M1 1h14v4H1z" fill="#333b46"/><path d="M3 8h3M8 8h5M3 12h3M8 12h5" stroke="#222" stroke-width="1.500"/></svg>
    <svg class="opt2" viewBox="0 0 16 16"><path d="M4 1h11v14H4z" fill="#999"/><path d="M0 12h8M5 9l4 3-4 3" fill="none" stroke="#eee" stroke-width="1.500"/></svg>
    <span class="combo"><select aria-label="Design option" disabled><option>Main Model</option></select><svg><use href="#chev"/></svg></span>
  </div>
  <div class="right">
    <svg viewBox="0 0 16 16"><path d="M0 5a3 3 0 0 1 6-1h4a3 3 0 1 1 0 3H6a3 3 0 0 1-6-2z" fill="#e9b820" stroke="#8a6a08" stroke-width=".8"/><path d="M8 6v9l2-2 2 3 1-1-1-2h2z" fill="#fff" stroke="#222" stroke-width=".8"/></svg>
    <svg viewBox="0 0 16 16"><path d="M1 8l4-4h7M1 13l4-4h5M1 8v5h8" fill="none" stroke="#3a8fca" stroke-width="1.500"/><path d="M10 1l5 6M15 1l-5 6" stroke="#d2201d" stroke-width="2.200"/><path d="M9 6v9l2-2 2 3 1-1-1-2h2z" fill="#fff" stroke="#222" stroke-width=".8"/></svg>
    <svg viewBox="0 0 16 16"><path d="M1 1h9v3L9 8h2v3H1V8h2L2 4z" fill="#e58a3a" stroke="#9c4b10"/><path d="M9 6v9l2-2 2 3 1-1-1-2h2z" fill="#fff" stroke="#222" stroke-width=".8"/></svg>
    <svg viewBox="0 0 16 16"><path d="M1 3h8v10l-3 2H1z" fill="#87c1e8" stroke="#3c7aa5"/><path d="M10 1l5 6M15 1l-5 6" stroke="#d2201d" stroke-width="2.200"/><path d="M9 6v9l2-2 2 3 1-1-1-2h2z" fill="#fff" stroke="#222" stroke-width=".8"/></svg>
    <svg viewBox="0 0 16 16"><path d="M5 0v10M0 5h10M3 2l2-2 2 2M3 8l2 2 2-2" fill="none" stroke="#222" stroke-width="1.500"/><path d="M10 1l5 6M15 1l-5 6" stroke="#d2201d" stroke-width="2.200"/><path d="M9 6v9l2-2 2 3 1-1-1-2h2z" fill="#fff" stroke="#222" stroke-width=".8"/></svg>
    <svg viewBox="0 0 16 16"><circle cx="8" cy="8" r="5" fill="none" stroke="#999" stroke-width="2.500" stroke-dasharray="3 1"/></svg>
    <svg viewBox="0 0 16 16"><path d="M1 1h14l-5 6v8l-4-3V7z" fill="#d5dbe2" stroke="#4a525c" stroke-width="1.200"/></svg><span class="cnt">:0</span>
    <span class="zoom">130%</span>
  </div>
</footer>
</body>
</html>
```
FILE: styles.css
```css
* { box-sizing: border-box; }
body {
  margin: 0;
  height: 100vh;
  display: flex;
  flex-direction: column;
  overflow: hidden;
  background: #ededed;
  color: #333;
  font: 12px/16px "Open Sans", "Noto Sans", sans-serif;
}
button, select { font: inherit; color: inherit; border: 0; background: none; padding: 0; margin: 0; }
a { color: inherit; text-decoration: none; }
svg { flex: none; display: block; }
.defs { position: absolute; width: 0; height: 0; }
.dd { width: 8px; height: 8px; }

/* title bar */
.titlebar { display: flex; height: 30px; flex: none; background: #808080; color: #e8e8e8; border-top: 1px solid #5c5c5c; }
.qat, .account { display: flex; align-items: center; height: 24px; flex: none; }
.qat .dd, .account .dd { width: 13px; padding: 0 2px; color: #3a3a3a; }
.slot { width: 24px; height: 22px; display: grid; place-items: center; }
.slot svg { width: 16px; height: 16px; }
.slot.logo { width: 28px; }
.slot.logo svg { width: 20px; height: 22px; }
.slot.lit { background: #b5d7f5; border: 1px solid #3d8bd4; }
.vs { width: 1px; height: 20px; background: #999; margin: 0 2px; }
.title { flex: 1; text-align: center; line-height: 20px; white-space: nowrap; }
.user { display: flex; align-items: center; gap: 6px; width: 96px; }
.user svg { width: 16px; height: 16px; }
.user + .dd { margin-left: 6px; }
.account .win { width: 25px; display: grid; place-items: center; }
.win svg { width: 12px; height: 12px; }
.win.first { margin-left: 52px; }

/* ribbon tabs */
.tabs { display: flex; height: 20px; flex: none; background: #808080; color: #dedede; line-height: 20px; white-space: nowrap; }
.tabs a { padding: 0 8px 0 9px; }
.tabs .file { width: 46px; text-align: center; background: #2c7bb0; color: #fff; }
.tabs .active { background: #eee; color: #333; }
.tabs .ctx { background: #e4efd6; color: #333; }
.mini { margin-left: 20px; }
.mini svg { width: 28px; height: 12px; }

/* ribbon */
.ribbon { display: flex; height: 97px; flex: none; border-bottom: 2px solid #a8a8a8; background: #eee; color: #444; }
.panel { display: flex; flex-direction: column; flex: none; border-right: 1px solid #dedede; }
.p194 { width: 194px; } .p149 { width: 149px; } .p139 { width: 139px; } .p88 { width: 88px; } .p283 { width: 283px; }
.p236 { width: 236px; } .p445 { width: 445px; } .p135 { width: 135px; }
.panel.last { border: 0; width: 112px; }
.tools { display: flex; height: 78px; padding-top: 3px; white-space: nowrap; }
.plabel { height: 17px; line-height: 17px; text-align: center; }
.plabel.cad { display: flex; justify-content: center; align-items: center; gap: 6px; }
.big { display: flex; flex-direction: column; align-items: center; height: 71px; padding-top: 2px; flex: none; position: relative; }
.big > svg { width: 32px; height: 32px; }
.big > span { margin-top: 4px; }
.big > .dd { width: 8px; height: 8px; }
.big > .side { position: absolute; right: 0; bottom: 14px; }
.qa { font-size: 22px; font-weight: 400; line-height: 32px; color: #111; }
.w42 { width: 42px; } .w50 { width: 50px; } .w64 { width: 64px; } .w68 { width: 68px; } .w78 { width: 78px; } .w84 { width: 84px; }
.panel .w84 { flex: 0 1 84px; margin: 0 auto; }
.big.lit { background: #b3d3f2; border: 1px solid #3d8bd4; height: 72px; padding-top: 1px; }
.big.sep, .stack.sep { border-right: 1px solid #d2d2d2; }
.stack { display: flex; flex-direction: column; justify-content: center; flex: 1; height: 74px; padding-left: 6px; }
.stack.slim { padding-left: 4px; }
.stack.narrow { flex: 0 0 82px; padding-left: 8px; }
.stack.medium { flex: 0 0 101px; padding-left: 4px; }
.stack.medium + .stack { padding-left: 10px; }
.stack button { display: flex; align-items: center; gap: 6px; height: 25px; }
.stack svg { width: 16px; height: 16px; }
.stack .dd { width: 8px; height: 8px; }

/* drop-down menu */
.drop { position: relative; margin-left: 2px; }
.menu { position: absolute; z-index: 5; left: 0; top: 71px; width: 180px; padding: 1px 0; background: #fff; border: 1px solid #777; box-shadow: 1px 1px 3px #999; color: #555; }
.menu button { display: flex; align-items: center; gap: 3px; width: 100%; height: 40px; padding-left: 4px; white-space: nowrap; }
.mi { display: grid; width: 30px; height: 30px; flex: none; }
.mi svg { grid-area: 1 / 1; width: 30px; height: 30px; }
.cursor { position: absolute; z-index: 6; left: 37px; top: 61px; width: 12px; height: 19px; }
.context { height: 26px; line-height: 27px; padding-left: 9px; background: #e4efd6; color: #222; flex: none; }

/* combo boxes */
.combo { display: grid; align-items: center; }
.combo select { grid-area: 1 / 1; appearance: none; width: 100%; padding-left: 3px; background: #fff; border: 1px solid #ddd; }
.combo svg { grid-area: 1 / 1; justify-self: end; margin-right: 4px; width: 10px; height: 10px; pointer-events: none; }

/* properties palette */
main { display: flex; flex: 1; min-height: 0; }
h2 { margin: 0; font: inherit; height: 22px; flex: none; line-height: 23px; color: #444; }
.props { width: 221px; flex: none; display: flex; flex-direction: column; background: #eee; }
.props h2 { padding-left: 4px; }
.type { display: flex; align-items: center; gap: 5px; height: 67px; flex: none; padding-left: 4px; border-top: 1px solid #ddd; }
.thumb { width: 65px; height: 65px; border: 1px solid #ddd; display: grid; place-items: center; }
.thumb svg { width: 32px; height: 26px; }
.picker { display: flex; align-items: center; gap: 5px; height: 26px; flex: none; padding-left: 2px; }
.picker .combo { width: 139px; flex: none; }
.picker select { height: 22px; }
.picker button { display: flex; align-items: center; gap: 3px; white-space: nowrap; }
.picker button svg { width: 14px; height: 14px; }
.gridbox { flex: 1; min-height: 0; overflow: hidden; margin: 0 3px 0 1px; background: #fff; }
.grid { width: 216px; table-layout: fixed; border-collapse: collapse; color: #222; white-space: nowrap; }
.grid .c1 { width: 102px; } .grid .c2 { width: 101px; } .grid .c3 { width: 13px; }
.grid th { height: 20px; padding: 0 2px; text-align: left; font-weight: 400; background: #dadada; }
.grid td { height: 19px; padding: 0 0 0 2px; border: 1px dashed #bbb; border-width: 0 1px 1px 0; overflow: hidden; line-height: 16px; }
.grid td:first-child { padding-left: 9px; }
.grid .ro { color: #888; }
.grid button { display: block; width: 98px; height: 18px; line-height: 15px; border: 1px solid #ccc; border-bottom-color: #999; border-radius: 2px; background: #fdfdfd; }
.pfoot { display: flex; justify-content: space-between; align-items: center; height: 27px; flex: none; padding: 0 6px 0 3px; }
.pfoot a { color: #1a6fc4; text-decoration: underline; }
.pfoot button { width: 68px; height: 20px; background: #f8f8f8; border-radius: 3px; color: #999; }

/* view area */
.work { flex: 1; display: flex; flex-direction: column; min-width: 0; border-left: 1px solid #999; }
.vtabs { display: flex; height: 23px; flex: none; padding-left: 154px; background: #cacaca; border-bottom: 1px solid #f4f4f4; color: #444; line-height: 23px; white-space: nowrap; }
.vtabs a { display: flex; align-items: center; gap: 7px; padding: 0 20px 0 5px; }
.vtabs svg { width: 16px; height: 16px; }
.vtabs .faint svg { opacity: .5; }
.vtabs .cur { background: #fff; font-weight: 600; color: #222; padding: 0 5px; }
.vtabs .x { width: 12px; height: 12px; }
.more { margin-left: auto; width: 18px; display: grid; place-items: center; }
.more svg { width: 10px; height: 10px; }
.canvas { flex: 1; display: flex; min-height: 0; background: #d0d0d0; border-bottom: 1px solid #fff; margin-bottom: 3px; }
.sheet { flex: 1; min-width: 0; overflow: hidden; padding-left: 1px; }
.vscroll { width: 20px; background: #f0f0f0; border-right: 2px solid #bbb; padding: 16px 0 0 6px; }
.vscroll i { display: block; width: 5px; height: 116px; background: #888; }

.sched { width: 511px; table-layout: fixed; border-collapse: collapse; background: #fff; color: #222; font: italic 11px/16px "Liberation Sans", Arial, sans-serif; white-space: nowrap; }
.ca { width: 125px; } .cc { width: 261px; }
.sched td { padding: 0 1px; border: 1px dashed #999; overflow: hidden; }
.sched tr td:first-child { border-left: 1px solid #444; }
.sched tr td:last-child { border-right: 1px solid #444; }
.sched thead td { text-align: center; border-top: 1px solid #444; border-bottom: 1px solid #444; }
.sched .ttl td { height: 52px; border: 1px solid #444; }
.sched th { height: 21px; padding: 0; font-size: 13px; font-style: normal; font-weight: 700; background: #eee; border: 1px solid #555; }
.sched .hd td { height: 21px; }
.sched .gap td { height: 21px; background: #d0d0d0; }
.sched tbody tr { height: 21px; }
.sched tbody tr:nth-child(5n) { height: 20px; }

/* project browser */
.browser { width: 250px; flex: none; display: flex; flex-direction: column; background: #ededed; color: #222; }
.browser h2 { display: flex; align-items: center; gap: 1px; padding: 0 2px; white-space: nowrap; }
.browser h2 span { flex: 1; min-width: 0; }
.browser h2 svg { width: 12px; height: 12px; }
.brow { display: flex; flex: 1; min-height: 0; }
.tree { flex: 1; min-width: 0; overflow: hidden; margin: 0 0 0 1px; padding: 0 0 0 4px; list-style: none; white-space: nowrap; background: linear-gradient(#ccc, #ccc) 9px 0 / 1px 100% no-repeat #fff; }
.tree li { display: flex; align-items: center; height: 18px; padding-left: 17px; background: linear-gradient(#ccc, #ccc) 25px 0 / 1px 100% no-repeat; }
.tree li:nth-child(5n+2), .tree li:nth-child(5n+4) { height: 17px; }
.tree i { width: 21px; flex: none; height: 1px; background: repeating-linear-gradient(90deg, #bbb 0 1px, transparent 1px 2px) no-repeat 8px 0 / 13px 1px; }
.tree .ex { width: 10px; height: 10px; border: 1px solid #999; background: linear-gradient(#4a68b5, #4a68b5) center / 6px 1px no-repeat, linear-gradient(#4a68b5, #4a68b5) center / 1px 6px no-repeat, #f3f3f3; margin: 0 8px 0 3px; }
.tree .open { background: linear-gradient(#4a68b5, #4a68b5) center / 6px 1px no-repeat, #f3f3f3; }
.tree .sub .ex { margin-right: 12px; }
.tree .top { padding-left: 0; background: none; }
.tree .top .ex { margin: 0 8px 0 0; }
.tree .top svg { width: 16px; height: 14px; margin-right: 4px; }
.tree s { width: 14px; height: 14px; flex: none; margin-right: 7px; border: 1px solid #777; border-right-width: 2px; border-bottom-width: 2px; outline: 1px dashed #aaa; background: #f2f2f2; }
.tree s.on { background: #5fabe2; border: 1px solid #4f96cc; }
.tree .sel b { background: #e2e2e2; padding: 0 2px; margin-left: -2px; color: #000; }
.bscroll { width: 17px; padding: 113px 0 0 6px; }
.bscroll i { display: block; width: 5px; height: 253px; background: #8a8a8a; }
.hscroll { height: 18px; padding: 5px 0 0 19px; flex: none; }
.hscroll i { display: block; width: 59px; height: 5px; background: #8a8a8a; }

/* status bar */
.status { display: flex; align-items: center; height: 26px; flex: none; padding-top: 3px; background: #cacaca; border-bottom: 1px solid #888; color: #222; white-space: nowrap; }
.hint { width: 45%; padding-left: 2px; }
.mid, .right { display: flex; align-items: center; }
.status svg { width: 16px; height: 16px; }
.status .combo { width: 204px; margin-left: 6px; }
.status .combo select { height: 18px; border-color: #e8e8e8; line-height: 14px; }
.status .combo svg { width: 10px; height: 10px; }
.status .combo select:disabled { background: #f5f5f5; color: #999; opacity: 1; }
.mid .pen { margin: 0 6px; }
.mid .cube { margin: 0 18px; }
.mid .opt2 { margin-left: 8px; }
.right { margin-left: auto; gap: 8px; }
.right .cnt { margin-left: -8px; }
.right .zoom { margin: 0 10px 0 52px; }
```
